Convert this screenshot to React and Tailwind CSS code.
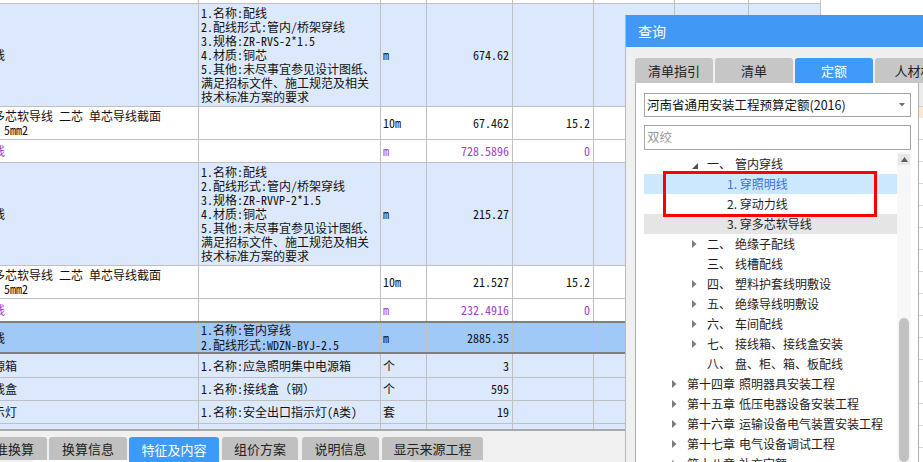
import React from 'react';

const W = ['w-[199px]', 'w-[182px]', 'w-[46px]', 'w-[86px]', 'w-[81px]', 'w-[81px]', 'w-[74px]', 'w-[72px]'];

function Cell({ i, className = '', children }) {
  return (
    <div className={`${W[i]} shrink-0 h-full border-r border-[#c0c0c0] overflow-hidden flex items-center ${className}`}>
      {children}
    </div>
  );
}

function Row({ h, bg = 'bg-white', border = 'border-b border-[#c0c0c0]', c = [], purple = false }) {
  return (
    <div className={`flex w-[821px] shrink-0 ${h} ${bg} ${border} ${purple ? 'text-[#a23fc9]' : 'text-[#111]'}`}>
      <Cell i={0}>{c[0]}</Cell>
      <Cell i={1} className="pl-[2px]">{c[1]}</Cell>
      <Cell i={2} className="pl-[2px]">{c[2]}</Cell>
      <Cell i={3} className="justify-end pr-[3px]">{c[3]}</Cell>
      <Cell i={4} className="justify-end pr-[3px]">{c[4]}</Cell>
      <Cell i={5} />
      <Cell i={6} />
      <Cell i={7} />
    </div>
  );
}

const Name = ({ children }) => <div className="ml-[-7px] whitespace-nowrap">{children}</div>;

const Lines = ({ lines, lead = 'leading-[14px]', extra = '' }) => (
  <div className={`whitespace-nowrap ${lead} ${extra}`}>
    {lines.map((l, k) => (
      <div key={k}>{l}</div>
    ))}
  </div>
);

const feat1 = [
  '1.名称:配线',
  '2.配线形式:管内/桥架穿线',
  '3.规格:ZR-RVS-2*1.5',
  '4.材质:铜芯',
  '5.其他:未尽事宜参见设计图纸、',
  '满足招标文件、施工规范及相关',
  '技术标准方案的要求',
];
const feat2 = [
  '1.名称:配线',
  '2.配线形式:管内/桥架穿线',
  '3.规格:ZR-RVVP-2*1.5',
  '4.材质:铜芯',
  '5.其他:未尽事宜参见设计图纸、',
  '满足招标文件、施工规范及相关',
  '技术标准方案的要求',
];

const WireName = () => (
  <div className="whitespace-nowrap leading-[14px]">
    <div className="ml-[-7px]">多芯软导线 二芯 单芯导线截面</div>
    <div className="ml-[4px]">5mm2</div>
  </div>
);

function Table() {
  return (
    <div className="flex flex-col font-['Noto_Sans_Mono_CJK_SC','Noto_Sans_CJK_SC',sans-serif] text-[12px]">
      <Row h="h-[4px]" />
      <Row h="h-[103px]" bg="bg-[#dce9fc]" c={[<Name>线</Name>, <Lines lines={feat1} />, 'm', '674.62']} />
      <Row h="h-[33px]" c={[<WireName />, null, '10m', '67.462', '15.2']} />
      <Row h="h-[23px]" purple c={[<Name>线</Name>, null, 'm', '728.5896', '0']} />
      <Row h="h-[103px]" bg="bg-[#dce9fc]" c={[<Name>线</Name>, <Lines lines={feat2} />, 'm', '215.27']} />
      <Row h="h-[33px]" c={[<WireName />, null, '10m', '21.527', '15.2']} />
      <Row h="h-[22px]" border="" purple c={[<Name>线</Name>, null, 'm', '232.4916', '0']} />
      <Row
        h="h-[33px]"
        bg="bg-[#a1c9f8]"
        border="border-y-2 border-[#7f7f7f]"
        c={[
          <Name>线</Name>,
          <Lines lines={['1.名称:管内穿线', '2.配线形式:WDZN-BYJ-2.5']} lead="leading-[15px]" extra="self-start mt-[-1px]" />,
          'm',
          '2885.35',
        ]}
      />
      <Row h="h-[24px]" bg="bg-[#dce9fc]" c={[<Name>源箱</Name>, '1.名称:应急照明集中电源箱', '个', '3']} />
      <Row h="h-[23px]" bg="bg-[#dce9fc]" c={[<Name>线盒</Name>, '1.名称:接线盒（钢）', '个', '595']} />
      <Row h="h-[23px]" bg="bg-[#dce9fc]" c={[<Name>示灯</Name>, '1.名称:安全出口指示灯(A类)', '套', '19']} />
      <Row h="h-[5px]" bg="bg-[#dce9fc]" border="" />
    </div>
  );
}

function BottomTabs() {
  const tabs = [
    { t: '标准换算', cls: 'ml-[-31px] w-[78px]' },
    { t: '换算信息', cls: 'ml-[2px] w-[78px]' },
    { t: '特征及内容', cls: 'ml-[2px] w-[90px]', active: true },
    { t: '组价方案', cls: 'ml-[3px] w-[76px]' },
    { t: '说明信息', cls: 'ml-[4px] w-[77px]' },
    { t: '显示来源工程', cls: 'ml-[3px] w-[101px]' },
  ];
  return (
    <div className="flex-1 bg-[#f0f0f0] flex flex-col font-['Noto_Sans_CJK_SC',sans-serif]">
      <div className="h-[2px] bg-[#a9a9a9]" />
      <div className="h-[6px]" />
      <div className="flex items-start h-[26px]">
        {tabs.map((x) => (
          <div
            key={x.t}
            className={`${x.cls} shrink-0 rounded-t-[3px] flex items-center justify-center text-[13px] relative ${
              x.active ? 'h-[26px] bg-[#3e9af8] text-white z-10' : 'h-[23px] bg-[#c0c0c0] text-[#222]'
            }`}
          >
            {x.t}
          </div>
        ))}
      </div>
      <div className="ml-[33px] w-[377px] h-[3px] bg-white mt-[-3px]" />
    </div>
  );
}

const Collapsed = () => (
  <svg width="5" height="8" viewBox="0 0 5 8" className="ml-[1px]">
    <polygon points="0,0 4.5,4 0,8" fill="#7d7d7d" />
  </svg>
);
const Expanded = () => (
  <svg width="6" height="6" viewBox="0 0 6 6" className="ml-[1px] mt-[3px]">
    <polygon points="6,0 6,6 0,6" fill="#505050" />
  </svg>
);

const tree = [
  { k: 2, exp: true, n: '一、', t: '管内穿线' },
  { k: 3, t: '1. 穿照明线', sel: true },
  { k: 3, t: '2. 穿动力线' },
  { k: 3, t: '3. 穿多芯软导线', hov: true },
  { k: 2, tri: true, n: '二、', t: '绝缘子配线' },
  { k: 2, n: '三、', t: '线槽配线' },
  { k: 2, tri: true, n: '四、', t: '塑料护套线明敷设' },
  { k: 2, tri: true, n: '五、', t: '绝缘导线明敷设' },
  { k: 2, tri: true, n: '六、', t: '车间配线' },
  { k: 2, tri: true, n: '七、', t: '接线箱、接线盒安装' },
  { k: 2, n: '八、', t: '盘、柜、箱、板配线' },
  { k: 1, n: '第十四章', t: '照明器具安装工程' },
  { k: 1, n: '第十五章', t: '低压电器设备安装工程' },
  { k: 1, n: '第十六章', t: '运输设备电气装置安装工程' },
  { k: 1, n: '第十七章', t: '电气设备调试工程' },
  { k: 1, n: '第十八章', t: '补充定额' },
];

function TreeRow({ r }) {
  const bg = r.sel ? 'bg-[#cce8ff] text-[#3a72d4]' : r.hov ? 'bg-[#e5e5e5] text-[#1e1e1e]' : 'text-[#1e1e1e]';
  if (r.k === 3) {
    return (
      <div className={`h-[20px] shrink-0 flex items-center pl-[83px] whitespace-nowrap ${bg}`}>
        <span>{r.t}</span>
      </div>
    );
  }
  if (r.k === 2) {
    return (
      <div className={`h-[20px] shrink-0 flex items-center pl-[47px] whitespace-nowrap ${bg}`}>
        <div className="w-[16px] shrink-0 flex items-center">{r.exp ? <Expanded /> : r.tri ? <Collapsed /> : null}</div>
        <span className="w-[28px] shrink-0">{r.n}</span>
        <span>{r.t}</span>
      </div>
    );
  }
  return (
    <div className={`h-[20px] shrink-0 flex items-center pl-[27px] whitespace-nowrap ${bg}`}>
      <div className="w-[16px] shrink-0 flex items-center">
        <Collapsed />
      </div>
      <span className="mr-[4px]">{r.n}</span>
      <span>{r.t}</span>
    </div>
  );
}

function Dialog() {
  return (
    <div className="absolute left-[625px] top-[15px] w-[320px] h-[447px] border-l border-[#b8b8b8] bg-[#f0f0f0] flex flex-col font-['Noto_Sans_CJK_SC',sans-serif] overflow-hidden">
      <div className="h-[32px] shrink-0 bg-[#4198f5] text-white text-[14px] pl-[12px] flex items-center">查询</div>
      <div className="pl-[9px] pt-[11px] flex flex-col flex-1 min-h-0">
        <div className="flex gap-[2px] h-[25px] shrink-0">
          {['清单指引', '清单', '定额', '人材机'].map((t, i) => (
            <div
              key={t}
              className={`w-[78px] shrink-0 rounded-t-[3px] flex items-center justify-center text-[13px] ${
                i === 2 ? 'bg-[#3f9af8] text-white' : 'bg-[#c6c6c6] text-[#222]'
              }`}
            >
              {t}
            </div>
          ))}
        </div>
        <div className="flex flex-1 min-h-0">
          <div className="w-[284px] shrink-0 bg-white border-l border-r border-[#b0b0b0] pl-[8px] pt-[10px] flex flex-col text-[12px]">
            <div className="w-[267px] h-[24px] shrink-0 border border-[#a6a6a6] flex items-center justify-between pl-[2px] pr-[5px] text-[#111] text-[12.5px]">
              <span>河南省通用安装工程预算定额(2016)</span>
              <svg width="6" height="4" viewBox="0 0 6 4">
                <polygon points="0,0 6,0 3,3.5" fill="#6e6e6e" />
              </svg>
            </div>
            <div className="w-[267px] h-[25px] shrink-0 mt-[8px] border border-[#a6a6a6] flex items-center pl-[2px] text-[#9a9a9a] text-[12.5px]">
              双绞
            </div>
            <div className="flex mt-[2px] flex-1 min-h-0">
              <div className="w-[253px] shrink-0 flex flex-col pt-[2px]">
                {tree.map((r, i) => (
                  <TreeRow key={i} r={r} />
                ))}
              </div>
              <div className="w-[14px] shrink-0 flex flex-col items-center bg-[#f7f7f7]">
                <div className="w-[12px] h-[11px] mt-[2px] bg-[#e6e6e6] flex items-center justify-center">
                  <svg width="7" height="5" viewBox="0 0 7 5">
                    <polygon points="0,5 7,5 3.5,0" fill="#5c5c5c" />
                  </svg>
                </div>
                <div className="h-[153px] shrink-0" />
                <div className="w-[10px] flex-1 bg-[#c1c1c1] rounded-[5px]" />
              </div>
            </div>
          </div>
          <div className="flex-1 flex flex-col bg-white">
            <div className="h-[24px] shrink-0 bg-[#ececec] border-b border-[#cfcfcf]" />
            <div className="h-[11px] shrink-0 bg-[#fde9d0]" />
            {Array.from({ length: 15 }).map((_, i) => (
              <div key={i} className="h-[22px] shrink-0 border-b border-[#dadada]" />
            ))}
          </div>
        </div>
      </div>
      <div className="absolute left-[37px] top-[156px] w-[214px] h-[46px] border-[3px] border-[#ff0000]" />
    </div>
  );
}

export default function App() {
  return (
    <div className="relative w-[923px] h-[462px] overflow-hidden bg-white">
      <div className="flex flex-col h-full">
        <Table />
        <BottomTabs />
      </div>
      <Dialog />
    </div>
  );
}
